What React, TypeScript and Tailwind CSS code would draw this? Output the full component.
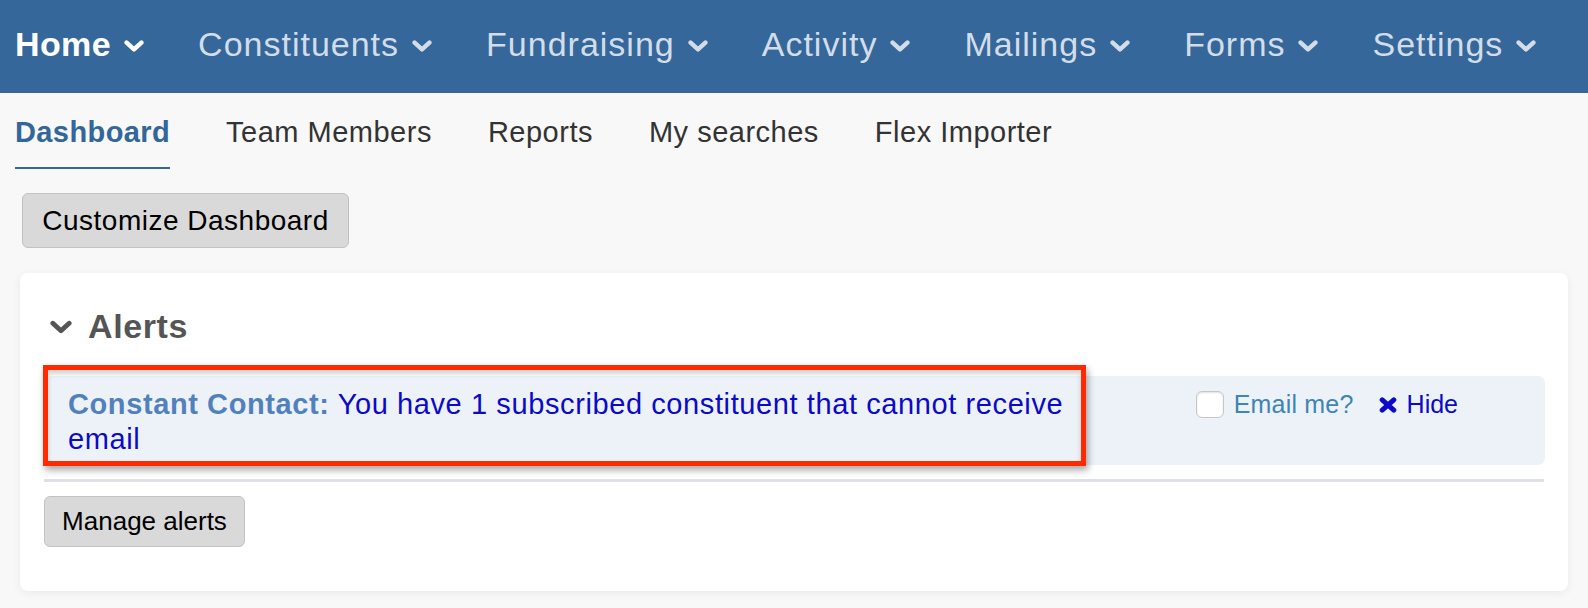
import React from "react";

function Chevron({ className }: { className?: string }) {
  return (
    <svg viewBox="0 0 20 12" className={className} fill="none">
      <polyline
        points="2.6,2.6 10,9.4 17.4,2.6"
        stroke="currentColor"
        strokeWidth="4.4"
        strokeLinecap="round"
        strokeLinejoin="round"
      />
    </svg>
  );
}

function XIcon({ className }: { className?: string }) {
  return (
    <svg viewBox="0 0 18 16" className={className} fill="none">
      <path d="M3.2 2.8 L14.8 13.2 M14.8 2.8 L3.2 13.2" stroke="currentColor" strokeWidth="5" strokeLinecap="round" />
    </svg>
  );
}

const navItems = ["Home", "Constituents", "Fundraising", "Activity", "Mailings", "Forms", "Settings"];
const tabs = ["Dashboard", "Team Members", "Reports", "My searches", "Flex Importer"];

export default function App() {
  return (
    <div className="min-h-[608px] w-[1588px] bg-[#f8f8f8] font-['Liberation_Sans',Arial,sans-serif]">
      {/* Top navigation */}
      <div className="flex h-[93px] items-center gap-[54px] bg-[#35679a] pb-[4px] pl-[15px]">
        {navItems.map((item, i) => (
          <div
            key={item}
            className={
              i === 0
                ? "flex items-center gap-[13px] text-[34px] font-bold tracking-[0.4px] text-white"
                : "flex items-center gap-[13px] text-[34px] tracking-[1px] text-[#d2dde9]"
            }
          >
            <span>{item}</span>
            <Chevron className="mt-[3px] h-[12px] w-[20px]" />
          </div>
        ))}
      </div>

      {/* Sub tabs */}
      <div className="flex gap-[56px] pl-[15px] pt-[22px]">
        {tabs.map((t, i) => (
          <div
            key={t}
            className={
              i === 0
                ? "border-b-[2.5px] border-[#35679a] pb-[18px] text-[29px] leading-[34px] font-bold tracking-[0.4px] text-[#336699]"
                : "border-b-[2.5px] border-transparent pb-[18px] text-[29px] leading-[34px] tracking-[0.5px] text-[#333333]"
            }
          >
            {t}
          </div>
        ))}
      </div>

      {/* Customize button */}
      <div className="pl-[22px] pt-[24px]">
        <button className="flex h-[55px] w-[327px] items-center justify-center rounded-[6px] border border-[#c2c2c2] bg-[#d9d9d9] text-[28px] tracking-[0.5px] text-black">
          Customize Dashboard
        </button>
      </div>

      {/* Card */}
      <div className="mx-[20px] mt-[25px] rounded-[8px] bg-white px-[24px] pb-[44px] pt-[33px] shadow-[0_2px_10px_rgba(0,0,0,0.06)]">
        <div className="flex items-center">
          <Chevron className="ml-[6px] mt-[2px] h-[14px] w-[22px] text-[#555555]" />
          <h2 className="ml-[16px] text-[34px] leading-[40px] font-bold tracking-[0.6px] text-[#555555]">Alerts</h2>
        </div>

        <div className="relative mt-[30px] mr-[-1px] flex rounded-[7px] bg-[#edf2f9] pb-[8px] pl-[24px] pt-[11px]">
          <p className="w-[1020px] text-[29px] leading-[35px] tracking-[0.6px]">
            <span className="font-bold text-[#5181bc]">Constant Contact:</span>
            <span className="text-[#0a0ac8]"> You have 1 subscribed constituent that cannot receive email</span>
          </p>
          <div className="ml-auto flex h-[35px] items-center pr-[87px]">
            <span className="h-[27px] w-[28px] rounded-[6px] border border-[#c6c6c6] bg-white shadow-[inset_0_1px_2px_rgba(0,0,0,0.12)]" />
            <span className="ml-[10px] text-[25px] tracking-[0.2px] text-[#3d86b4]">Email me?</span>
            <XIcon className="ml-[25px] h-[16px] w-[18px] text-[#0a0ac8]" />
            <span className="ml-[10px] text-[25px] text-[#0a0ac8]">Hide</span>
          </div>

          {/* annotation highlight */}
          <div className="pointer-events-none absolute left-[-1px] top-[-11px] h-[101px] w-[1043px] border-[5px] border-[#ff2a00] shadow-[2px_4px_7px_rgba(0,0,0,0.35),inset_0_4px_5px_rgba(0,0,0,0.18)]" />
        </div>

        <div className="mt-[14px] h-[3px] bg-[#dde0e6]" />

        <div className="pt-[14px]">
          <button className="flex h-[51px] w-[201px] items-center justify-center rounded-[6px] border border-[#c2c2c2] bg-[#d9d9d9] text-[26px] text-black">
            Manage alerts
          </button>
        </div>
      </div>
      <div className="h-[17px]" />
    </div>
  );
}
